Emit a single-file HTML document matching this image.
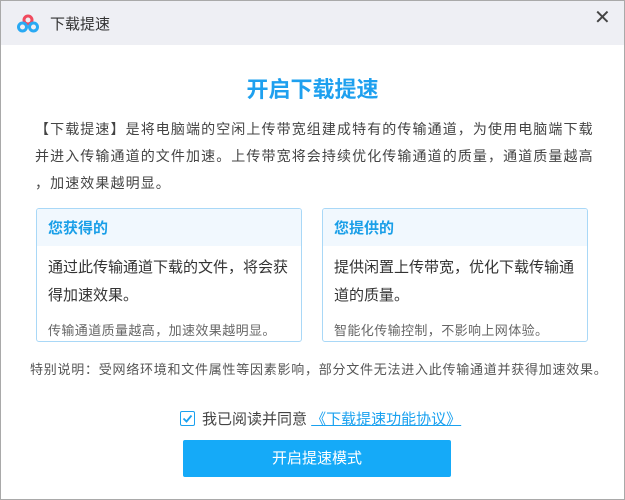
<!DOCTYPE html><html><head><meta charset="utf-8"><style>
*{margin:0;padding:0;box-sizing:border-box}
body{width:625px;height:500px;overflow:hidden;background:#fff;font-family:"Liberation Sans","Noto Sans CJK SC",sans-serif;position:relative}
.frame{position:absolute;left:0;top:0;width:625px;height:500px;border:1px solid #a9a9a9}
.tb{position:absolute;left:1px;top:1px;width:623px;height:44px;background:#eeeff4}
.tt{position:absolute;left:50px;top:13px;font-size:15px;color:#333}
.x{position:absolute;left:594px;top:5px;font-size:20px;color:#444}
h1{position:absolute;left:0;width:625px;top:72px;text-align:center;font-size:22px;color:#1ea0ef;font-weight:bold}
.p{position:absolute;left:35px;top:116px;width:600px;font-size:14px;letter-spacing:1.1px;line-height:27px;color:#444;white-space:nowrap}
.card{position:absolute;top:208px;width:266px;height:134px;border:1px solid #a9d8f7;border-radius:3px;overflow:hidden}
.ch{height:37px;background:#f1f8fe;padding:8px 11px;font-size:15px;font-weight:bold;color:#1a9fe8}
.cb{padding:8px 11px 0;font-size:15px;line-height:28px;color:#333;white-space:nowrap}
.cs{position:absolute;left:11px;top:111px;font-size:13px;letter-spacing:0.4px;color:#666;white-space:nowrap}
.note{position:absolute;left:30px;top:359px;font-size:13px;letter-spacing:0.75px;color:#555;white-space:nowrap}
.chk{position:absolute;left:180px;top:411px;width:15px;height:15px;border:1px solid #1aa1ef;border-radius:2px}
.ag{position:absolute;left:202px;top:408px;font-size:15px;color:#444;white-space:nowrap}
.ag a{color:#1aa1ef;text-decoration:underline}
.btn{position:absolute;left:183px;top:440px;width:268px;height:37px;background:#15aaf8;border-radius:2px;color:#fff;font-size:15px;text-align:center;line-height:37px}
</style></head><body>
<div class="frame"></div>
<div class="tb"></div>
<svg style="position:absolute;left:16px;top:14px" width="24" height="20" viewBox="0 0 24 20"><circle cx="12" cy="6" r="4" fill="none" stroke="#f04a5e" stroke-width="3"/><circle cx="6.5" cy="13" r="4" fill="none" stroke="#29a9f3" stroke-width="3"/><circle cx="17.5" cy="13" r="4" fill="none" stroke="#29a9f3" stroke-width="3"/></svg>
<div class="tt">下载提速</div>
<div class="x">✕</div>
<h1>开启下载提速</h1>
<div class="p">【下载提速】是将电脑端的空闲上传带宽组建成特有的传输通道，为使用电脑端下载<br>并进入传输通道的文件加速。上传带宽将会持续优化传输通道的质量，通道质量越高<br>，加速效果越明显。</div>
<div class="card" style="left:36px"><div class="ch">您获得的</div><div class="cb">通过此传输通道下载的文件，将会获<br>得加速效果。</div><div class="cs">传输通道质量越高，加速效果越明显。</div></div>
<div class="card" style="left:322px"><div class="ch">您提供的</div><div class="cb">提供闲置上传带宽，优化下载传输通<br>道的质量。</div><div class="cs">智能化传输控制，不影响上网体验。</div></div>
<div class="note">特别说明：受网络环境和文件属性等因素影响，部分文件无法进入此传输通道并获得加速效果。</div>
<div class="chk"><svg width="13" height="13" viewBox="0 0 13 13" style="position:absolute;left:0;top:0"><path d="M2.5 6.5l3 3 5-6" fill="none" stroke="#1aa1ef" stroke-width="1.8"/></svg></div>
<div class="ag">我已阅读并同意 <a>《下载提速功能协议》</a></div>
<div class="btn">开启提速模式</div>
</body></html>
